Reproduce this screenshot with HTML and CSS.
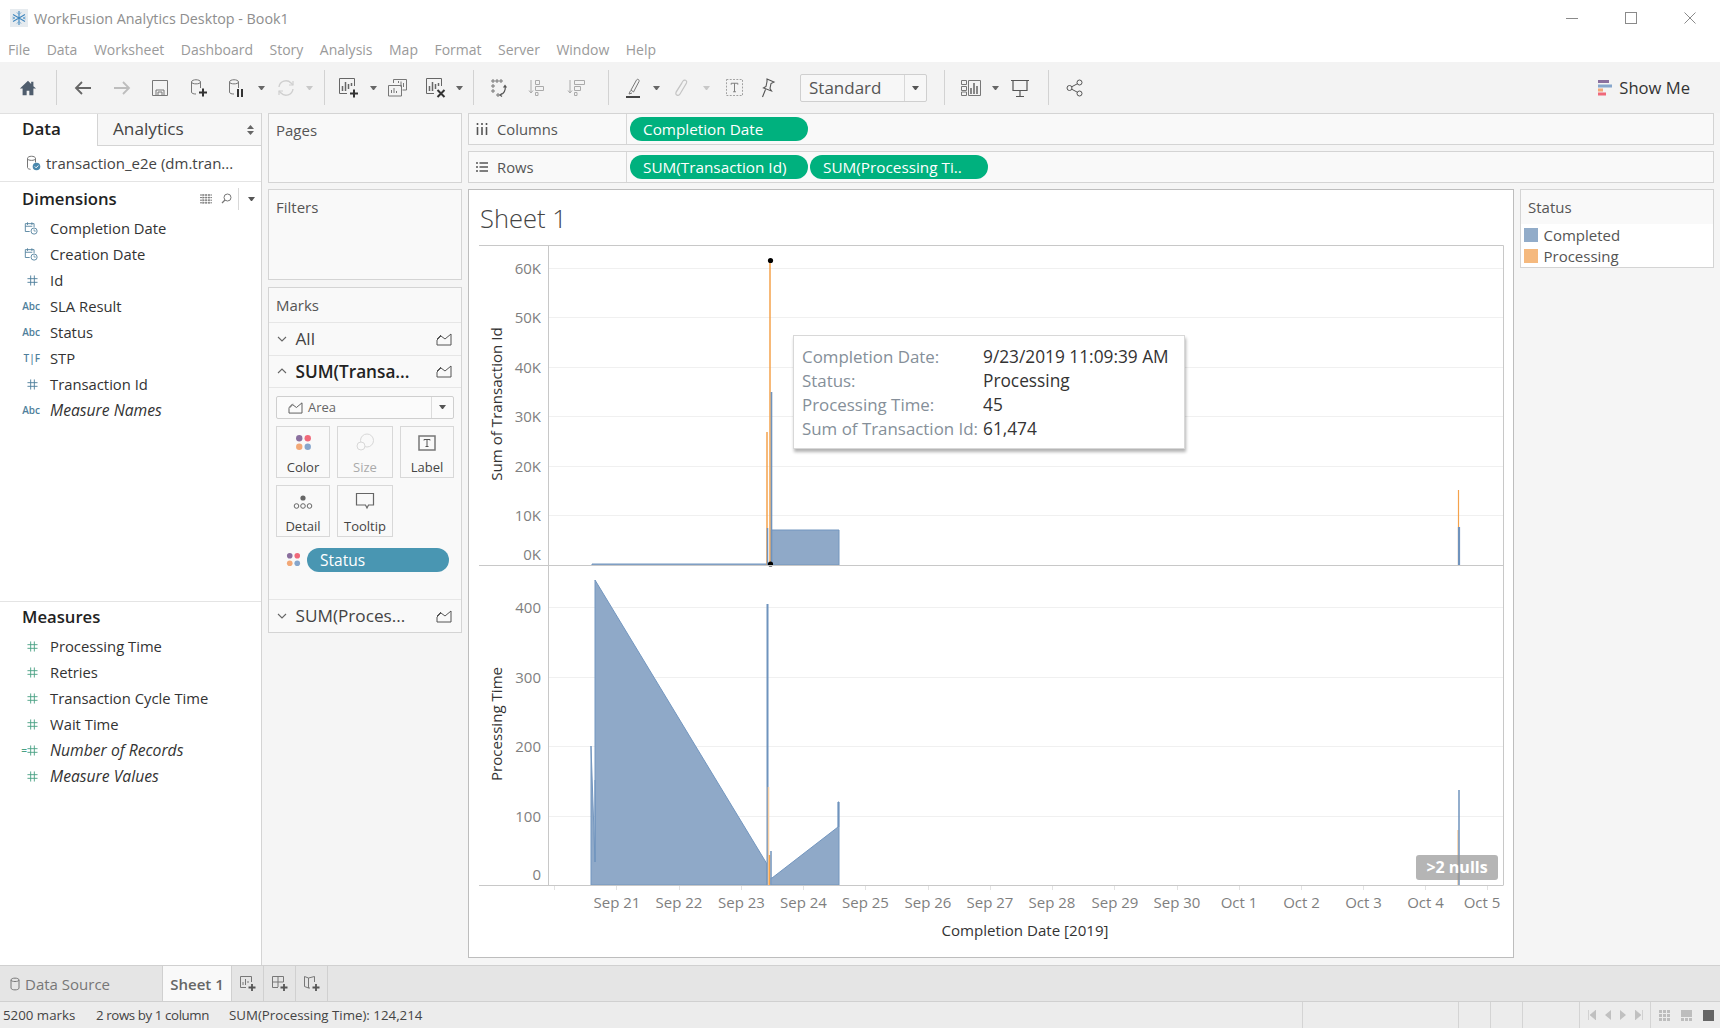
FILE: index.html
```html
<!DOCTYPE html>
<html lang="en">

<head>
  <meta charset="UTF-8" />
  <title>WorkFusion Analytics Desktop - Book1</title>
  <link rel="stylesheet" href="styles.css">
</head>

<body>
  <!-- shared icons -->
  <svg class="sprite">
    <symbol id="i-date" viewBox="0 0 16 16">
      <path d="M1.5 3h10v4M1.5 3v9h5M1.5 6h8M4 1.5v3M9 1.5v3" fill="none" stroke="currentColor" />
      <circle cx="11.5" cy="11.5" r="3.5" fill="none" stroke="currentColor" />
      <path d="M11.5 9.5v2h2" fill="none" stroke="currentColor" stroke-width=".8" />
    </symbol>
    <symbol id="i-hash" viewBox="0 0 12 12">
      <path d="M4 .5v11M8 .5v11M.5 4h11M.5 8h11" fill="none" stroke="currentColor" />
    </symbol>
    <symbol id="i-area" viewBox="0 0 16 14">
      <path d="M1 13V8l4-4 4 3 6-5v11zM1 7l4-4" fill="none" stroke="currentColor" />
    </symbol>
    <symbol id="i-chev-down" viewBox="0 0 10 6">
      <path d="M1 1l4 4 4-4" fill="none" stroke="currentColor" stroke-width="1.1" />
    </symbol>
    <symbol id="i-chev-up" viewBox="0 0 10 6">
      <path d="M1 5l4-4 4 4" fill="none" stroke="currentColor" stroke-width="1.1" />
    </symbol>
    <symbol id="i-dots" viewBox="0 0 16 16">
      <circle cx="4" cy="4" r="3" fill="#8a6f9e" />
      <circle cx="12" cy="4" r="3" fill="#f0697a" />
      <circle cx="4" cy="12" r="3" fill="#f2a877" />
      <circle cx="12" cy="12" r="3" fill="#86a6cc" />
    </symbol>
    <symbol id="i-bars" viewBox="0 0 20 20">
      <path d="M16.5 9V1.5h-15v15H9" fill="none" stroke="currentColor" />
      <path d="M4.5 14V9M7.5 14V5M10.5 12V7M13.5 9V6" fill="none" stroke="currentColor" stroke-width="1.5" />
    </symbol>
  </svg>

  <header class="titlebar">
    <svg class="app-logo" viewBox="0 0 18 18">
      <rect x="0" y="0" width="18" height="18" fill="#e6ebef" />
      <path d="M9 2v14M3 5.500l12 7M15 5.500l-12 7" stroke="#3f86bd" stroke-width="1.100" />
      <path d="M7 3.500l2 2 2-2M7 14.500l2-2 2 2M2.500 8l2.500 1-2.500 1M15.500 8l-2.500 1 2.500 1" fill="none" stroke="#6aa5d0" />
    </svg>
    <span class="app-title">WorkFusion Analytics Desktop - Book1</span>
    <div class="win-btns">
      <svg viewBox="0 0 12 12"><path d="M0 6.500h12" stroke="#8a8a8a" /></svg>
      <svg viewBox="0 0 12 12"><rect x=".5" y=".5" width="11" height="11" fill="none" stroke="#8a8a8a" /></svg>
      <svg viewBox="0 0 12 12"><path d="M.5.500l11 11M11.500.500l-11 11" stroke="#8a8a8a" /></svg>
    </div>
  </header>

  <nav class="menubar">
    <span>File</span><span>Data</span><span>Worksheet</span><span>Dashboard</span><span>Story</span>
    <span>Analysis</span><span>Map</span><span>Format</span><span>Server</span><span>Window</span><span>Help</span>
  </nav>

  <div class="toolbar">
    <div class="tool tool-home">
      <svg width="18" height="18" viewBox="0 0 20 20"><path d="M10 2L1 10.500h3V18h4.500v-5h3v5H16v-7.500h3L16 8V3h-2.500v2.500z" fill="#4f5d6d" /></svg>
    </div>
    <i class="tool-sep"></i>
    <div class="tool">
      <svg width="20" height="20" viewBox="0 0 20 20"><path d="M18 10H3M9 4l-6 6 6 6" fill="none" stroke="#666" stroke-width="1.8" /></svg>
    </div>
    <div class="tool">
      <svg width="20" height="20" viewBox="0 0 20 20"><path d="M2 10h15M11 4l6 6-6 6" fill="none" stroke="#bdbdbd" stroke-width="1.800" /></svg>
    </div>
    <div class="tool">
      <svg width="18" height="18" viewBox="0 0 18 18"><path d="M1.500 1.500h15v15h-15zM5 16.500V11h8v5.500M7 16v-3h4v3" fill="none" stroke="#777" /></svg>
    </div>
    <div class="tool">
      <svg width="20" height="20" viewBox="0 0 20 20">
        <path d="M2.500 4c0-3 9-3 9 0v6M2.500 4c0 2.500 9 2.500 9 0M2.500 4v10c0 1.500 2 2 4.500 2" fill="none" stroke="#777" />
        <path d="M14 10.500v8M10 14.500h8" stroke="#333" stroke-width="2" />
      </svg>
    </div>
    <div class="tool">
      <svg width="20" height="20" viewBox="0 0 20 20">
        <path d="M2.500 4c0-3 9-3 9 0v6M2.500 4c0 2.500 9 2.500 9 0M2.500 4v10c0 1.500 2 2 4.500 2" fill="none" stroke="#777" />
        <path d="M11 11v8M15 11v8" stroke="#333" stroke-width="2" />
      </svg>
    </div>
    <i class="caret"></i>
    <div class="tool tool-refresh">
      <svg width="18" height="18" viewBox="0 0 18 18">
        <path d="M2 8a7 7 0 0 1 12-4l2 2M16 10a7 7 0 0 1-12 4l-2-2" fill="none" stroke="#cfcfcf" stroke-width="1.400" />
        <path d="M16 2v4h-4M2 16v-4h4" fill="none" stroke="#cfcfcf" stroke-width="1.200" />
      </svg>
    </div>
    <i class="caret caret-off"></i>
    <i class="tool-sep tool-sep-wide"></i>
    <div class="tool">
      <svg width="22" height="22" viewBox="0 0 22 22">
        <use href="#i-bars" width="20" height="20" color="#666" />
        <path d="M16 12.500v8M12 16.500h8" stroke="#333" stroke-width="2" />
      </svg>
    </div>
    <i class="caret"></i>
    <div class="tool tool-dup">
      <svg width="20" height="20" viewBox="0 0 20 20">
        <path d="M5.500 5V1.500h13V12h-4M.5 7.500h13V18H.5z" fill="none" stroke="#777" />
        <path d="M3.500 15v-3M6 15v-5M8.500 15v-2M10.500 5V3M13 9V3.500M15.500 9V5" stroke="#777" />
      </svg>
    </div>
    <div class="tool tool-clear">
      <svg width="22" height="22" viewBox="0 0 22 22">
        <use href="#i-bars" width="20" height="20" color="#666" />
        <path d="M12.500 13l7 7M19.500 13l-7 7" stroke="#333" stroke-width="2" />
      </svg>
    </div>
    <i class="caret"></i>
    <i class="tool-sep tool-sep-wide"></i>
    <div class="tool tool-sm">
      <svg width="20" height="20" viewBox="0 0 20 20">
        <path d="M3 2h2v2H3zM7 2h2v2H7zM11 2h2v2h-2zM3 7h2v2H3zM3 12h2v2H3zM8 16h2v2H8z" fill="none" stroke="#777" />
        <path d="M16 8c1 4-1 8-5 9M13 15.500L11 17l2 1.500M14.500 9.500L16 7.500l1.500 2" fill="none" stroke="#555" stroke-width="1.200" />
      </svg>
    </div>
    <div class="tool tool-sm">
      <svg width="20" height="20" viewBox="0 0 20 20">
        <path d="M3 2v13M1 12.500L3 15l2-2.500" fill="none" stroke="#aaa" />
        <path d="M7.500 2.500h4v4h-4zM7.500 8.500h8v4h-8zM7.500 14.500h2.500v3H7.500z" fill="none" stroke="#aaa" />
      </svg>
    </div>
    <div class="tool tool-sm">
      <svg width="20" height="20" viewBox="0 0 20 20">
        <path d="M3 2v13M1 12.500L3 15l2-2.500" fill="none" stroke="#aaa" />
        <path d="M7.500 2.500h10v4h-10zM7.500 8.500h6v4h-6zM7.500 14.500h2.500v3H7.500z" fill="none" stroke="#aaa" />
      </svg>
    </div>
    <i class="tool-sep tool-sep-mid"></i>
    <div class="tool tool-hl">
      <svg width="20" height="22" viewBox="0 0 20 22">
        <path d="M8 13l2.500 2L16 4.500c.6-2-1.500-3-2.500-1.500zM7.500 13.500L6 17l3-1" fill="none" stroke="#777" />
        <path d="M3 20h14" stroke="#444" stroke-width="2" />
      </svg>
    </div>
    <i class="caret"></i>
    <div class="tool tool-clip">
      <svg width="18" height="20" viewBox="0 0 18 20">
        <path d="M4 14L11 3c1.500-2 4.500-.5 3.500 2L8 16c-1.500 2.500-5 1-4-1.500L10 5" fill="none" stroke="#c4c4c4" stroke-width="1.200" />
      </svg>
    </div>
    <i class="caret caret-off"></i>
    <div class="tool tool-text">
      <svg width="17" height="17" viewBox="0 0 18 18">
        <rect x=".5" y=".5" width="17" height="17" fill="none" stroke="#999" stroke-dasharray="2 1.500" />
        <path d="M5.500 6V4.500h7V6M9 4.500v9M7.500 13.500h3" fill="none" stroke="#777" />
      </svg>
    </div>
    <div class="tool tool-pin">
      <svg width="18" height="20" viewBox="0 0 18 20">
        <path d="M8 1l7 3-3 1.500-1 5 1.500 2.500-8-3 2.500-1.500 1-5zM6.500 11.500L3.500 19" fill="none" stroke="#555" stroke-width="1.100" />
      </svg>
    </div>
    <div class="mark-size">
      <span class="mark-size-text">Standard</span>
      <span class="mark-size-drop"><i class="caret caret-dark"></i></span>
    </div>
    <i class="tool-sep tool-sep-last"></i>
    <div class="tool tool-showme">
      <svg width="20" height="18" viewBox="0 0 20 18">
        <path d="M.5 1.500h5v4h-5zM.5 7.500h5v4h-5zM.5 13h5v3.500h-5zM7.500 1.500h12v15h-12z" fill="none" stroke="#777" />
        <path d="M10 15V9M13 15V4M16 15V7" stroke="#666" stroke-width="1.500" />
      </svg>
    </div>
    <i class="caret"></i>
    <div class="tool tool-present">
      <svg width="20" height="20" viewBox="0 0 20 20">
        <path d="M1 2.500h18M3 2.500v10h14v-10M10 12.500V18M6 18.500h8" fill="none" stroke="#555" stroke-width="1.200" />
      </svg>
    </div>
    <i class="tool-sep tool-sep-last2"></i>
    <div class="tool tool-share">
      <svg width="18" height="18" viewBox="0 0 18 18">
        <circle cx="3.500" cy="9" r="2.500" fill="none" stroke="#555" />
        <circle cx="13.500" cy="3.500" r="2.500" fill="none" stroke="#555" />
        <circle cx="13.500" cy="14.500" r="2.500" fill="none" stroke="#555" />
        <path d="M5.700 7.800l5.600-3M5.700 10.200l5.600 3" stroke="#555" />
      </svg>
    </div>
    <div class="show-me">
      <svg width="14" height="16" viewBox="0 0 14 16">
        <rect width="11" height="3" fill="#8a6f9e" />
        <rect y="4.500" width="14" height="3" fill="#86a6cc" />
        <rect y="8.500" width="5" height="3" fill="#f2a877" />
        <rect y="12.500" width="8" height="3" fill="#f0697a" />
      </svg>
      <span>Show Me</span>
    </div>
  </div>

  <main class="main">
    <aside class="data-pane">
      <div class="pane-tabs">
        <div class="tab-data">Data</div>
        <div class="tab-analytics">Analytics
          <svg class="updown" width="7" height="10" viewBox="0 0 7 10"><path d="M3.500 0L7 4H0zM3.500 10L0 6h7z" fill="#666" /></svg>
        </div>
      </div>
      <div class="ds-row">
        <svg class="ds-icon" width="15" height="16" viewBox="0 0 15 16">
          <path d="M1.500 3.500c0-3 8-3 8 0v4M1.500 3.500c0 2.500 8 2.500 8 0M1.500 3.500v9c0 1 1 1.500 3 1.800" fill="none" stroke="#777" />
          <circle cx="10.500" cy="11.500" r="3.800" fill="#4a88ad" />
          <path d="M8.800 11.500l1.300 1.300 2.200-2.300" fill="none" stroke="#fff" />
        </svg>
        <span>transaction_e2e (dm.tran...</span>
      </div>

      <section class="fields fields-dim">
        <div class="fields-head">
          <h2>Dimensions</h2>
          <svg class="head-icon" width="12" height="10" viewBox="0 0 12 10">
            <path d="M0 1h12M0 3.600h12M0 6.200h12M0 8.800h12M3 0v10M6 0v10M9 0v10" stroke="#777" stroke-dasharray="2 .6" />
          </svg>
          <svg class="head-icon head-search" width="11" height="11" viewBox="0 0 11 11">
            <circle cx="6.500" cy="4.500" r="3.500" fill="none" stroke="#777" />
            <path d="M4 7l-3 3" stroke="#777" stroke-width="1.200" />
          </svg>
          <i class="head-sep"></i>
          <i class="caret caret-dark"></i>
        </div>
        <ul class="field-list">
          <li><span class="ftype ftype-dim"><svg width="14" height="14"><use href="#i-date" /></svg></span>Completion Date</li>
          <li><span class="ftype ftype-dim"><svg width="14" height="14"><use href="#i-date" /></svg></span>Creation Date</li>
          <li><span class="ftype ftype-dim"><svg width="11" height="11"><use href="#i-hash" /></svg></span>Id</li>
          <li><span class="ftype ftype-dim">Abc</span>SLA Result</li>
          <li><span class="ftype ftype-dim">Abc</span>Status</li>
          <li><span class="ftype ftype-dim">T|F</span>STP</li>
          <li><span class="ftype ftype-dim"><svg width="11" height="11"><use href="#i-hash" /></svg></span>Transaction Id</li>
          <li class="calc"><span class="ftype ftype-dim">Abc</span>Measure Names</li>
        </ul>
      </section>

      <section class="fields fields-mea">
        <div class="fields-head">
          <h2>Measures</h2>
        </div>
        <ul class="field-list">
          <li><span class="ftype ftype-mea"><svg width="11" height="11"><use href="#i-hash" /></svg></span>Processing Time</li>
          <li><span class="ftype ftype-mea"><svg width="11" height="11"><use href="#i-hash" /></svg></span>Retries</li>
          <li><span class="ftype ftype-mea"><svg width="11" height="11"><use href="#i-hash" /></svg></span>Transaction Cycle Time</li>
          <li><span class="ftype ftype-mea"><svg width="11" height="11"><use href="#i-hash" /></svg></span>Wait Time</li>
          <li class="calc"><span class="ftype ftype-mea"><span class="eq">=</span><svg width="11" height="11"><use href="#i-hash" /></svg></span>Number of Records</li>
          <li class="calc"><span class="ftype ftype-mea"><svg width="11" height="11"><use href="#i-hash" /></svg></span>Measure Values</li>
        </ul>
      </section>
    </aside>

    <div class="cards">
      <div class="card card-pages"><div class="card-title">Pages</div></div>
      <div class="card card-filters"><div class="card-title">Filters</div></div>
      <div class="card card-marks">
        <div class="card-title marks-title">Marks</div>
        <div class="marks-row">
          <svg class="chev" width="10" height="6"><use href="#i-chev-down" /></svg>
          <span class="marks-name">All</span>
          <svg class="area-ico" width="16" height="14"><use href="#i-area" /></svg>
        </div>
        <div class="marks-row marks-row-on">
          <svg class="chev" width="10" height="6"><use href="#i-chev-up" /></svg>
          <span class="marks-name marks-name-on">SUM(Transa...</span>
          <svg class="area-ico" width="16" height="14"><use href="#i-area" /></svg>
        </div>
        <div class="marks-body">
          <div class="mark-type">
            <svg class="area-ico" width="15" height="13"><use href="#i-area" /></svg>
            <span class="mark-type-name">Area</span>
            <span class="mark-type-drop"><i class="caret caret-dark"></i></span>
          </div>
          <div class="mark-btns">
            <div class="mark-btn">
              <svg width="17" height="17"><use href="#i-dots" /></svg>
              <span>Color</span>
            </div>
            <div class="mark-btn mark-btn-off">
              <svg width="20" height="18" viewBox="0 0 20 18">
                <circle cx="12" cy="7.500" r="6.500" fill="none" stroke="#d8d8d8" />
                <circle cx="6" cy="13" r="4" fill="#fafafa" stroke="#d8d8d8" />
              </svg>
              <span>Size</span>
            </div>
            <div class="mark-btn">
              <svg width="18" height="16" viewBox="0 0 18 16">
                <rect x="1" y="1" width="16" height="14" fill="none" stroke="#777" stroke-width="1.500" />
                <path d="M6 5.500V4.500h6v1M9 4.500v7M7.500 11.500h3" fill="none" stroke="#555" />
              </svg>
              <span>Label</span>
            </div>
            <div class="mark-btn">
              <svg width="20" height="16" viewBox="0 0 20 16">
                <circle cx="10" cy="4" r="2.600" fill="#666" />
                <circle cx="3.500" cy="12" r="2.300" fill="none" stroke="#666" />
                <circle cx="10" cy="12" r="2.300" fill="none" stroke="#666" />
                <circle cx="16.500" cy="12" r="2.300" fill="none" stroke="#666" />
              </svg>
              <span>Detail</span>
            </div>
            <div class="mark-btn">
              <svg width="20" height="18" viewBox="0 0 20 18">
                <path d="M1.500 1.500h17v11.500h-5l-1.500 3-1.500-3h-9z" fill="none" stroke="#666" stroke-width="1.200" />
              </svg>
              <span>Tooltip</span>
            </div>
          </div>
          <div class="mark-pill-row">
            <svg width="15" height="15"><use href="#i-dots" /></svg>
            <span class="pill pill-status">Status</span>
          </div>
        </div>
        <div class="marks-row marks-row-last">
          <svg class="chev" width="10" height="6"><use href="#i-chev-down" /></svg>
          <span class="marks-name">SUM(Proces...</span>
          <svg class="area-ico" width="16" height="14"><use href="#i-area" /></svg>
        </div>
      </div>
    </div>

    <div class="work">
      <div class="shelf">
        <div class="shelf-label">
          <svg width="12" height="12" viewBox="0 0 12 12"><path d="M1.500 4v8M6 4v8M10.500 4v8M1.500 0v2M6 0v2M10.500 0v2" stroke="#555" stroke-width="1.600" /></svg>
          <span>Columns</span>
        </div>
        <div class="shelf-pills"><span class="pill">Completion Date</span></div>
      </div>
      <div class="shelf">
        <div class="shelf-label">
          <svg width="12" height="12" viewBox="0 0 12 12"><path d="M0 2h2M3.500 2H12M0 6h2M3.500 6H12M0 10h2M3.500 10H12" stroke="#555" stroke-width="1.500" /></svg>
          <span>Rows</span>
        </div>
        <div class="shelf-pills">
          <span class="pill">SUM(Transaction Id)</span>
          <span class="pill">SUM(Processing Ti..</span>
        </div>
      </div>

      <div class="sheet-row">
        <div class="view">
          <div class="view-title">Sheet 1</div>
          <svg class="chart" viewBox="469 245 1044 712">
            <g class="grid">
              <path d="M548 268.500H1503M548 317.500H1503M548 367.500H1503M548 416.500H1503M548 466.500H1503M548 515.500H1503" />
              <path d="M548 607.500H1503M548 677.500H1503M548 746.500H1503M548 816.500H1503" />
            </g>

            <!-- top pane -->
            <path class="area" d="M592 564V565.500H767V564z" />
            <path class="area" d="M771 530H839V565H771z" />
            <path class="spike-o" d="M767 432V565" stroke-width="1.500" />
            <path class="spike-b" d="M767.500 528V565" stroke-width="1.500" />
            <path class="spike-o" d="M770 260V565" stroke-width="1.500" />
            <path class="spike-b" d="M771.500 392V565" stroke-width="1.600" />
            <path class="spike-o" d="M1458.500 490V565" stroke-width="1.200" />
            <path class="spike-b" d="M1459 527V565" stroke-width="2.200" />
            <circle class="dot" cx="770.500" cy="260.500" r="2.600" />
            <circle class="dot" cx="770.500" cy="564" r="2.600" />

            <!-- bottom pane -->
            <path class="area" d="M591 885V746L595 862V580L767 864V885z" />
            <path class="spike-b" d="M595 780V862" stroke-width="1" />
            <path class="spike-b" d="M767.500 604V885" stroke-width="2" />
            <path class="spike-o spike-faint" d="M768.500 787V885" stroke-width="1.500" />
            <path class="spike-o" d="M769.500 855V885" stroke-width="1.500" />
            <path class="spike-b" d="M771 851V885" stroke-width="1.500" />
            <path class="area" d="M771 885V878L772 878L838 827V802H839V885z" />
            <path class="spike-b" d="M838.500 802V827" stroke-width="1.500" />
            <path class="spike-o spike-faint" d="M1458 830V885" stroke-width="1.500" />
            <path class="spike-b" d="M1459 790V885" stroke-width="1.500" />

            <g class="axis">
              <path d="M479 245.500H1503.500V885M548.500 245V885M479 565.500H1503M479 885.500H1503.500" />
            </g>
            <g class="ticks">
              <path d="M554.500 886v4M616.500 886v4M679.500 886v4M741.500 886v4M803.500 886v4M865.500 886v4M928.500 886v4M990.500 886v4M1052.500 886v4M1114.500 886v4M1177.500 886v4M1239.500 886v4M1301.500 886v4M1363.500 886v4M1425.500 886v4M1487.500 886v4" />
            </g>

            <g class="y-labels">
              <text x="541" y="274">60K</text>
              <text x="541" y="323">50K</text>
              <text x="541" y="373">40K</text>
              <text x="541" y="422">30K</text>
              <text x="541" y="472">20K</text>
              <text x="541" y="521">10K</text>
              <text x="541" y="560">0K</text>
              <text x="541" y="613">400</text>
              <text x="541" y="683">300</text>
              <text x="541" y="752">200</text>
              <text x="541" y="822">100</text>
              <text x="541" y="880">0</text>
            </g>
            <g class="x-labels">
              <text x="617" y="908">Sep 21</text>
              <text x="679" y="908">Sep 22</text>
              <text x="741.500" y="908">Sep 23</text>
              <text x="803.500" y="908">Sep 24</text>
              <text x="865.500" y="908">Sep 25</text>
              <text x="928" y="908">Sep 26</text>
              <text x="990" y="908">Sep 27</text>
              <text x="1052" y="908">Sep 28</text>
              <text x="1115" y="908">Sep 29</text>
              <text x="1177" y="908">Sep 30</text>
              <text x="1239" y="908">Oct 1</text>
              <text x="1301.500" y="908">Oct 2</text>
              <text x="1363.500" y="908">Oct 3</text>
              <text x="1425.500" y="908">Oct 4</text>
              <text x="1482" y="908">Oct 5</text>
            </g>
            <text class="axis-title" x="1025" y="936">Completion Date [2019]</text>
            <text class="axis-title" transform="translate(502 404) rotate(-90)">Sum of Transaction Id</text>
            <text class="axis-title" transform="translate(502 724) rotate(-90)">Processing Time</text>
          </svg>

          <div class="tooltip">
            <span class="tip-key">Completion Date:</span><span class="tip-val">9/23/2019 11:09:39 AM</span>
            <span class="tip-key">Status:</span><span class="tip-val">Processing</span>
            <span class="tip-key">Processing Time:</span><span class="tip-val">45</span>
            <span class="tip-key">Sum of Transaction Id:</span><span class="tip-val">61,474</span>
          </div>
          <div class="nulls">&gt;2 nulls</div>
        </div>

        <div class="legend">
          <div class="legend-title">Status</div>
          <div class="legend-item"><i class="swatch swatch-blue"></i>Completed</div>
          <div class="legend-item"><i class="swatch swatch-orange"></i>Processing</div>
        </div>
      </div>
    </div>
  </main>

  <div class="tabbar">
    <div class="tab tab-source">
      <svg width="10" height="14" viewBox="0 0 10 14"><path d="M1 3c0-2.500 8-2.500 8 0v8c0 2.500-8 2.500-8 0zM1 3c0 2 8 2 8 0" fill="none" stroke="#777" /></svg>
      <span>Data Source</span>
    </div>
    <div class="tab tab-sheet">Sheet 1</div>
    <div class="tab tab-new">
      <svg width="18" height="18" viewBox="0 0 18 18">
        <path d="M12.500 7V1.500h-11v11H7M4 10V7M6.500 10V4M9 8V6" fill="none" stroke="#777" />
        <path d="M13 9v7M9.500 12.500h7" stroke="#555" stroke-width="1.800" />
      </svg>
    </div>
    <div class="tab tab-new">
      <svg width="18" height="18" viewBox="0 0 18 18">
        <path d="M12.500 7V1.500h-11v11H7M1.500 7h11M7 1.500V12" fill="none" stroke="#777" />
        <path d="M13 9v7M9.500 12.500h7" stroke="#555" stroke-width="1.800" />
      </svg>
    </div>
    <div class="tab tab-new">
      <svg width="18" height="18" viewBox="0 0 18 18">
        <path d="M1.500 1.500l4 1.500v10l-4-1.500zM5.500 3l6-1.500V7M5.500 13H7" fill="none" stroke="#777" />
        <path d="M13 9v7M9.500 12.500h7" stroke="#555" stroke-width="1.800" />
      </svg>
    </div>
  </div>

  <footer class="statusbar">
    <span class="stat stat-marks">5200 marks</span>
    <span class="stat stat-rows">2 rows by 1 column</span>
    <span class="stat stat-sum">SUM(Processing Time): 124,214</span>
    <i class="stat-cell stat-cell-a"></i>
    <i class="stat-cell stat-cell-b"></i>
    <i class="stat-cell stat-cell-c"></i>
    <i class="stat-cell stat-cell-d"></i>
    <div class="pager">
      <svg width="8" height="10" viewBox="0 0 8 10"><path d="M.5 0v10M8 0v10L2 5z" fill="#c0c0c0" stroke="#c0c0c0" stroke-width=".6" /></svg>
      <svg width="6" height="10" viewBox="0 0 6 10"><path d="M6 0v10L0 5z" fill="#c0c0c0" /></svg>
      <svg width="6" height="10" viewBox="0 0 6 10"><path d="M0 0v10l6-5z" fill="#c0c0c0" /></svg>
      <svg width="8" height="10" viewBox="0 0 8 10"><path d="M7.500 0v10M0 0v10l6-5z" fill="#c0c0c0" stroke="#c0c0c0" stroke-width=".6" /></svg>
    </div>
    <div class="view-modes">
      <svg width="11" height="11" viewBox="0 0 11 11"><path d="M0 0h3v3H0zM4 0h3v3H4zM8 0h3v3H8zM0 4h3v3H0zM4 4h3v3H4zM8 4h3v3H8zM0 8h3v3H0zM4 8h3v3H4zM8 8h3v3H8z" fill="#bdbdbd" /></svg>
      <svg width="11" height="11" viewBox="0 0 11 11"><path d="M0 0h11v7H0zM0 8h3v3H0zM4 8h3v3H4zM8 8h3v3H8z" fill="#bdbdbd" /></svg>
      <svg width="11" height="11" viewBox="0 0 11 11"><path d="M0 0h11v11H0z" fill="#666" /></svg>
    </div>
  </footer>
</body>

</html>
```

FILE: styles.css
```css
* {
  box-sizing: border-box;
}

html,
body {
  margin: 0;
  height: 100%;
}

body {
  width: 1720px;
  height: 1028px;
  overflow: hidden;
  background: #fff;
  font-family: 'Open Sans', 'Noto Sans', sans-serif;
  font-size: 15px;
  color: #333;
}

.sprite {
  display: none;
}

/* title + menu */
.titlebar {
  height: 36px;
  display: flex;
  align-items: center;
  padding-left: 10px;
}

.app-logo {
  width: 18px;
  height: 18px;
  flex: none;
}

.app-title {
  margin-left: 6px;
  font-size: 14.300px;
  color: #8e8e8e;
}

.win-btns {
  margin-left: auto;
  display: flex;
  gap: 47px;
  padding-right: 24px;
}

.win-btns svg {
  width: 12px;
  height: 12px;
  display: block;
}

.menubar {
  height: 26px;
  display: flex;
  align-items: center;
  gap: 16.500px;
  padding-left: 8px;
  font-size: 14px;
  color: #9a9a9a;
}

/* toolbar */
.toolbar {
  height: 51px;
  background: #f3f3f3;
  display: flex;
  align-items: center;
}

.tool {
  width: 38.5px;
  height: 30px;
  flex: none;
  display: flex;
  align-items: center;
  justify-content: center;
}

.tool-home {
  width: 56px;
}

.tool-sep {
  width: 1px;
  height: 35px;
  flex: none;
  background: #d2d2d2;
  margin-right: 7px;
}

.tool-sep-wide {
  margin-left: 9px;
  margin-right: 5px;
}

.tool-sep-mid {
  margin-left: 12px;
  margin-right: 6px;
}

.tool-sep-last {
  margin-left: 17px;
  margin-right: 7px;
}

.tool-sep-last2 {
  margin-left: 8px;
  margin-right: 7px;
}

.tool-refresh {
  width: 38px;
}

.tool-dup {
  width: 40px;
}

.tool-clear {
  width: 36px;
}

.tool-sm {
  width: 39px;
}

.tool-hl {
  width: 36px;
}

.tool-clip {
  width: 40px;
}

.tool-text {
  width: 28px;
  margin-left: 9px;
}

.tool-pin {
  width: 40px;
}

.tool-showme {
  width: 38px;
}

.tool-present {
  width: 40px;
}

.tool-share {
  width: 38px;
}

.caret {
  width: 7px;
  height: 4px;
  margin: 0 1.500px;
  flex: none;
  display: block;
  border-left: 3.500px solid transparent;
  border-right: 3.500px solid transparent;
  border-top: 4px solid #666;
}

.caret-off {
  border-top-color: #c8c8c8;
}

.caret-dark {
  border-top-color: #555;
}

.mark-size {
  width: 127px;
  height: 28px;
  margin-left: 12px;
  flex: none;
  display: flex;
  border: 1px solid #cfcfcf;
  border-radius: 2px;
  background: #f7f7f7;
}

.mark-size-text {
  flex: 1;
  padding-left: 8px;
  font-size: 17px;
  line-height: 26px;
  color: #555;
}

.mark-size-drop {
  width: 22px;
  border-left: 1px solid #d8d8d8;
  display: flex;
  align-items: center;
  justify-content: center;
}

.show-me {
  margin-left: auto;
  margin-right: 30px;
  display: flex;
  align-items: center;
  gap: 7px;
  font-size: 16.600px;
  color: #333;
}

/* main area */
.main {
  height: 852px;
  display: flex;
  background: #f5f5f5;
  padding-bottom: 7px;
}

.data-pane {
  width: 262px;
  flex: none;
  margin-bottom: -7px;
  background: #fff;
  border-right: 1px solid #d4d4d4;
  display: flex;
  flex-direction: column;
}

.pane-tabs {
  height: 33px;
  display: flex;
  border-top: 1px solid #e0e0e0;
}

.tab-data {
  width: 97px;
  padding-left: 22px;
  font-size: 17px;
  font-weight: 600;
  line-height: 30px;
  color: #222;
}

.tab-analytics {
  flex: 1;
  position: relative;
  padding-left: 15px;
  font-size: 17.200px;
  line-height: 30px;
  color: #444;
  background: #f7f7f7;
  border-left: 1px solid #d4d4d4;
  border-bottom: 1px solid #d4d4d4;
}

.updown {
  position: absolute;
  right: 7px;
  top: 11px;
}

.ds-row {
  height: 36px;
  display: flex;
  align-items: center;
  padding: 0 0 2px 26px;
  gap: 5px;
  border-bottom: 1px solid #e4e4e4;
  font-size: 15px;
  color: #444;
}

.fields-dim {
  height: 420px;
  border-bottom: 1px solid #e4e4e4;
}

.fields-head {
  height: 33px;
  display: flex;
  align-items: center;
  padding-left: 22px;
}

.fields-mea .fields-head {
  height: 31px;
  padding-bottom: 2px;
}

.fields-head h2 {
  margin: 0;
  margin-right: auto;
  font-size: 16.700px;
  font-weight: 600;
  color: #222;
}

.head-icon {
  margin-right: 9px;
}

.head-search {
  margin-right: 6px;
}

.head-sep {
  width: 1px;
  height: 22px;
  background: #d8d8d8;
  margin-right: 8px;
}

.fields-head .caret {
  margin-right: 6px;
}

.field-list {
  list-style: none;
  margin: 0;
  padding: 0;
}

.field-list li {
  height: 26px;
  display: flex;
  align-items: center;
  font-size: 14.800px;
}

.field-list .calc {
  font-size: 15.700px;
  font-style: italic;
}

.ftype {
  width: 50px;
  display: flex;
  justify-content: flex-end;
  flex: none;
  padding-right: 10px;
  align-items: center;
  font-size: 10px;
  font-style: normal;
  font-weight: 600;
}

.ftype svg {
  display: block;
  margin-right: 2px;
}

.ftype-dim {
  color: #4f7f9b;
}

.ftype-mea {
  color: #4aa184;
}

.eq {
  font-size: 10px;
  line-height: 10px;
}

/* pages / filters / marks */
.cards {
  width: 194px;
  flex: none;
  margin-left: 6px;
  display: flex;
  flex-direction: column;
  gap: 6.500px;
}

.card {
  background: #f9f9f9;
  border: 1px solid #d4d4d4;
}

.card-pages {
  height: 69.500px;
}

.card-filters {
  height: 91px;
}

.card-filters .card-title {
  padding-top: 7px;
}

.card-marks {
  height: 346px;
}

.card-title {
  padding: 6px 7px;
  font-size: 15px;
  line-height: 20px;
  color: #555;
}

.marks-title {
  height: 35px;
  padding-top: 7px;
  border-bottom: 1px solid #e6e6e6;
}

.marks-row {
  height: 33px;
  display: flex;
  align-items: center;
  padding: 0 9px 0 8px;
  border-bottom: 1px solid #e6e6e6;
  color: #666;
}

.marks-row-on {
  height: 32px;
}

.marks-row-last {
  border-bottom: 0;
  border-top: 1px solid #e6e6e6;
}

.chev {
  flex: none;
}

.marks-name {
  flex: 1;
  margin-left: 8.500px;
  font-size: 17.200px;
  color: #444;
}

.marks-name-on {
  font-weight: 600;
  color: #222;
}

.area-ico {
  flex: none;
  color: #555;
}

.marks-body {
  height: 211px;
  padding: 8px 7px 0;
}

.mark-type {
  height: 23px;
  display: flex;
  align-items: center;
  border: 1px solid #cfcfcf;
  border-radius: 2px;
  padding-left: 11px;
  background: #fbfbfb;
}

.mark-type-name {
  flex: 1;
  margin-left: 5px;
  font-size: 13px;
  color: #666;
}

.mark-type-drop {
  width: 22px;
  height: 100%;
  border-left: 1px solid #dcdcdc;
  display: flex;
  align-items: center;
  justify-content: center;
}

.mark-btns {
  margin-top: 7px;
  display: grid;
  grid-template-columns: 54px 56px 54px;
  grid-auto-rows: 52px;
  gap: 7px;
}

.mark-btn {
  display: flex;
  flex-direction: column;
  align-items: center;
  justify-content: flex-end;
  gap: 7px;
  padding-bottom: 1px;
  border: 1px solid #d8d8d8;
  font-size: 13px;
  color: #444;
}

.mark-btn-off {
  color: #aaa;
}

.mark-pill-row {
  margin-top: 11px;
  padding-left: 10px;
  display: flex;
  align-items: center;
  gap: 6px;
}

/* pills */
.pill {
  width: 178px;
  height: 24px;
  flex: none;
  display: block;
  padding-left: 13px;
  border-radius: 12px;
  background: #00b17e;
  font-size: 15.300px;
  line-height: 24px;
  color: #fff;
  white-space: nowrap;
}

.pill-status {
  width: 142px;
  background: #4996b2;
  font-size: 15.500px;
}

/* shelves + view */
.work {
  flex: 1;
  margin-left: 6px;
  margin-right: 6px;
  display: flex;
  flex-direction: column;
  gap: 6.500px;
}

.shelf {
  height: 31.500px;
  flex: none;
  display: flex;
  background: #f9f9f9;
  border: 1px solid #d4d4d4;
}

.shelf-label {
  width: 158px;
  flex: none;
  display: flex;
  align-items: center;
  gap: 9px;
  padding: 0 0 0 7px;
  border-right: 1px solid #d8d8d8;
  font-size: 14.800px;
  color: #555;
}

.shelf-pills {
  display: flex;
  gap: 2px;
  padding: 3px 0 0 3px;
}

.sheet-row {
  flex: 1;
  display: flex;
  gap: 6px;
  min-height: 0;
}

.view {
  width: 1046px;
  flex: none;
  position: relative;
  background: #fff;
  border: 1px solid #bdbdbd;
}

.view-title {
  height: 55px;
  padding: 10px 0 0 11px;
  font-size: 25.500px;
  font-weight: 300;
  line-height: 36px;
  color: #444;
}

.chart {
  display: block;
  width: 1044px;
  height: 712px;
}

.grid path {
  fill: none;
  stroke: #f0f0f0;
}

.axis path {
  fill: none;
  stroke: #c8c8c8;
}

.ticks path {
  fill: none;
  stroke: #e2e2e2;
}

.area {
  fill: #8fa9c8;
  stroke: #7396bf;
  stroke-width: 1;
}

.spike-o {
  fill: none;
  stroke: #f5a24b;
}

.spike-faint {
  stroke: #f7cfa3;
}

.spike-b {
  fill: none;
  stroke: #6f93bd;
}

.dot {
  fill: #000;
}

.y-labels text {
  text-anchor: end;
  font-size: 15px;
  fill: #7f7f7f;
}

.x-labels text {
  text-anchor: middle;
  font-size: 15px;
  fill: #7f7f7f;
}

.axis-title {
  text-anchor: middle;
  font-size: 15.100px;
  fill: #333;
}

/* over the chart */
.tooltip {
  position: absolute;
  left: 324px;
  top: 145px;
  width: 392px;
  height: 114px;
  padding: 8px 0 0 8px;
  display: grid;
  grid-template-columns: 181px 1fr;
  grid-auto-rows: 24px;
  align-items: center;
  background: #fff;
  border: 1px solid #d8d8d8;
  box-shadow: 1px 3px 3px rgba(0, 0, 0, 0.3);
  font-size: 16.900px;
}

.tip-key {
  color: #858f99;
  white-space: nowrap;
}

.tip-val {
  font-size: 17.300px;
  color: #333;
  white-space: nowrap;
}

.nulls {
  position: absolute;
  left: 947px;
  top: 665px;
  width: 82px;
  height: 25px;
  border-radius: 3px;
  background: rgba(150, 150, 150, 0.7);
  text-align: center;
  font-size: 16px;
  font-weight: 700;
  line-height: 25px;
  color: #fff;
}

/* legend */
.legend {
  width: 194px;
  height: 79px;
  flex: none;
  background: #fff;
  border: 1px solid #d4d4d4;
}

.legend-title {
  height: 34px;
  padding: 7px 7px 0;
  background: #f9f9f9;
  font-size: 15px;
  color: #555;
}

.legend-item {
  height: 21px;
  display: flex;
  align-items: center;
  padding-left: 3px;
  gap: 5.500px;
  font-size: 15px;
  color: #555;
}

.swatch {
  width: 14px;
  height: 14px;
  flex: none;
}

.swatch-blue {
  background: #92acc9;
}

.swatch-orange {
  background: #f5b97e;
}

/* bottom tabs + status */
.tabbar {
  height: 37px;
  display: flex;
  background: #e5e5e5;
  border-top: 1px solid #d0d0d0;
  border-bottom: 1px solid #d0d0d0;
}

.tab {
  display: flex;
  align-items: center;
  justify-content: center;
  border-right: 1px solid #d0d0d0;
}

.tab-source {
  width: 162px;
  justify-content: flex-start;
  padding-left: 10px;
  gap: 5px;
  border-right: 0;
  font-size: 15px;
  color: #777;
}

.tab-sheet {
  width: 70px;
  background: #f9f9f9;
  border-left: 1px solid #d0d0d0;
  font-size: 15px;
  font-weight: 600;
  color: #666;
}

.tab-new {
  width: 32px;
}

.statusbar {
  height: 26px;
  position: relative;
  display: flex;
  align-items: center;
  background: #ececec;
  font-size: 13.300px;
  color: #444;
}

.stat-marks {
  width: 96px;
  padding-left: 3px;
}

.stat-rows {
  width: 133px;
  letter-spacing: -0.4px;
}

.stat-sum {
  width: 1073px;
}

.stat-cell {
  height: 100%;
  flex: none;
  border-left: 1px solid #d4d4d4;
}

.stat-cell-a {
  width: 156px;
}

.stat-cell-b,
.stat-cell-c {
  width: 32px;
}

.stat-cell-d {
  width: 57px;
}

.pager {
  width: 71px;
  height: 100%;
  flex: none;
  display: flex;
  align-items: center;
  padding-left: 8px;
  gap: 9px;
  border-left: 1px solid #d4d4d4;
}

.view-modes {
  flex: 1;
  height: 100%;
  display: flex;
  align-items: center;
  gap: 11px;
  padding-left: 8px;
  border-left: 1px solid #d4d4d4;
}
```
